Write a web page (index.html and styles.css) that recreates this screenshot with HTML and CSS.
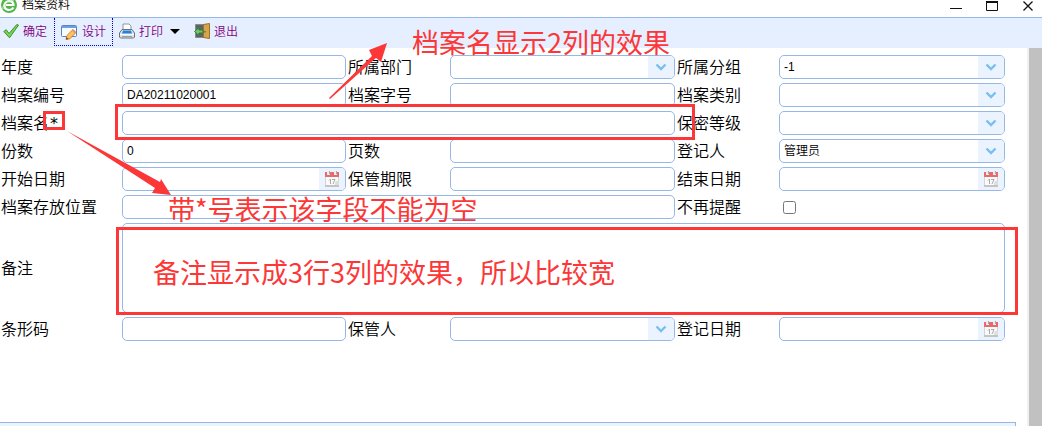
FILE: index.html
```html
<!DOCTYPE html>
<html lang="zh-CN">

<head>
    <meta charset="UTF-8">
    <meta name="viewport" content="width=device-width, initial-scale=1.0">
    <title>档案资料</title>
    <link rel="stylesheet" href="styles.css">
</head>

<body>
    <svg width="0" height="0" class="sprite">
        <symbol id="chevron" viewBox="0 0 12 8">
            <path d="M1.500 1.500 6 6l4.500-4.500" fill="none" stroke="#78bff0" stroke-width="2.400" />
        </symbol>
        <symbol id="calendar" viewBox="0 0 16 18">
            <path d="M1 6h14v10H1z" fill="#fafafa" />
            <path d="M1.500 7v9M14.500 7v5" stroke="#d4d4d4" />
            <path d="M1 15h14v2H1z" fill="#c4c4c4" />
            <path d="M1 2h14v5H1z" fill="#e56b6d" />
            <path d="M3 1h3v4H3zM10 1h3v4h-3z" fill="#ececec" />
            <path d="M5 1h1v3H5zM12 1h1v3h-1z" fill="#aaa" />
            <path d="M5 10.500l1.500-1.500v5M8 9.500h3l-2 4.500" fill="none" stroke="#aaa" />
            <path d="M12 11h3v4h-4v-2z" fill="#dedede" />
        </symbol>
    </svg>

    <header class="titlebar">
        <svg class="logo" width="16" height="16" viewBox="0 0 16 16">
            <circle cx="8" cy="8" r="8" fill="#52b64a" />
            <path d="M12.500 10.500C10 14.500 3.500 13.500 3.500 8.500c0-5.500 9-6 9-.500H5" fill="none" stroke="#fff" stroke-width="2.200" />
            <path d="M2 12C1 8 6 3 13 3" fill="none" stroke="#d8f3d0" />
        </svg>
        <h1>档案资料</h1>
        <div class="window-btns">
            <button type="button" aria-label="最小化"><svg width="12" height="12" viewBox="0 0 12 12"><path d="M0 7.500h12" stroke="#111" /></svg></button>
            <button type="button" aria-label="最大化"><svg width="12" height="12" viewBox="0 0 12 12"><path d="M.5 1v8.500h11V1M0 1.500h12" fill="none" stroke="#111" /><path d="M0 .5h12" stroke="#111" /></svg></button>
            <button type="button" aria-label="关闭"><svg width="12" height="12" viewBox="0 0 12 12"><path d="M1.500 .5l9 9M10.500 .5l-9 9" stroke="#111" stroke-width="1.300" /></svg></button>
        </div>
    </header>

    <nav class="toolbar">
        <button type="button" class="tool">
            <svg width="16" height="16" viewBox="0 0 16 16"><path d="M.8 8.500l2.400-1.800L6 10.500 13.800 1.500l1.700.6L6.500 14.800z" fill="#7bd35c" stroke="#379321" /></svg>
            <span>确定</span>
        </button>
        <button type="button" class="tool focused">
            <svg width="16" height="16" viewBox="0 0 16 16">
                <rect x=".5" y="1.500" width="15" height="11" rx="1" fill="#f7fbff" stroke="#5484c4" />
                <path d="M1 2h14v2H1z" fill="#6f9fdc" />
                <path d="M5 15.500l.8-3.800L12 5.500l3 3-6.200 6.200z" fill="#f7c565" stroke="#cb8322" />
                <path d="M11 6.500l3 3 1-1-3-3z" fill="#ec8a6c" />
                <path d="M5 15.500l.5-2.500 2 2z" fill="#734d29" />
            </svg>
            <span>设计</span>
        </button>
        <button type="button" class="tool">
            <svg width="16" height="16" viewBox="0 0 16 16">
                <path d="M4 1h6l2 2v5H4z" fill="#fff" stroke="#8b96a3" />
                <path d="M3 6.500h10L15.500 10v4l-1 1h-13l-1-1v-4z" fill="#dfe3e8" stroke="#69727e" />
                <path d="M4 7.500h8l1 3H3z" fill="#2583da" />
                <path d="M1 11.500h14" stroke="#fff" />
                <path d="M3 13.500h10" stroke="#9aa3ad" />
            </svg>
            <span>打印</span>
            <i class="caret"></i>
        </button>
        <button type="button" class="tool">
            <svg width="16" height="16" viewBox="0 0 16 16">
                <path d="M1.500 1.500h10v13h-10z" fill="#58656a" stroke="#8e8c7e" />
                <path d="M9.500 1.500L15.500.5v15l-6-1z" fill="#d5a54e" stroke="#9c7128" />
                <path d="M11 8v1.500" stroke="#614313" />
                <path d="M.5 8.500L5 4.500V7h4v3H5v2.500z" fill="#75c66b" stroke="#327a38" />
            </svg>
            <span>退出</span>
        </button>
    </nav>

    <main class="content">
        <form class="form">
            <label for="year">年度</label>
            <div class="field"><input type="text" id="year"></div>
            <label for="dept">所属部门</label>
            <div class="field"><select id="dept"><option></option></select><span class="addon"><svg width="12" height="8"><use href="#chevron" /></svg></span></div>
            <label for="group">所属分组</label>
            <div class="field"><select id="group"><option>-1</option></select><span class="addon"><svg width="12" height="8"><use href="#chevron" /></svg></span></div>

            <label for="fileNo">档案编号</label>
            <div class="field"><input type="text" id="fileNo" value="DA20211020001"></div>
            <label for="wordNo">档案字号</label>
            <div class="field"><input type="text" id="wordNo"></div>
            <label for="kind">档案类别</label>
            <div class="field"><select id="kind"><option></option></select><span class="addon"><svg width="12" height="8"><use href="#chevron" /></svg></span></div>

            <label for="fileName">档案名<span class="required">*</span></label>
            <div class="field span-2"><input type="text" id="fileName" required></div>
            <label for="secret">保密等级</label>
            <div class="field"><select id="secret"><option></option></select><span class="addon"><svg width="12" height="8"><use href="#chevron" /></svg></span></div>

            <label for="copies">份数</label>
            <div class="field"><input type="text" id="copies" value="0"></div>
            <label for="pages">页数</label>
            <div class="field"><input type="text" id="pages"></div>
            <label for="recorder">登记人</label>
            <div class="field"><select id="recorder"><option>管理员</option></select><span class="addon"><svg width="12" height="8"><use href="#chevron" /></svg></span></div>

            <label for="startDate">开始日期</label>
            <div class="field"><input type="text" id="startDate"><span class="addon"><svg width="16" height="18"><use href="#calendar" /></svg></span></div>
            <label for="keepTerm">保管期限</label>
            <div class="field"><input type="text" id="keepTerm"></div>
            <label for="endDate">结束日期</label>
            <div class="field"><input type="text" id="endDate"><span class="addon"><svg width="16" height="18"><use href="#calendar" /></svg></span></div>

            <label for="place">档案存放位置</label>
            <div class="field span-2"><input type="text" id="place"></div>
            <label for="noRemind">不再提醒</label>
            <div class="check"><input type="checkbox" id="noRemind"></div>

            <label for="remark">备注</label>
            <div class="field span-3"><textarea id="remark"></textarea></div>

            <label for="barcode">条形码</label>
            <div class="field"><input type="text" id="barcode"></div>
            <label for="keeper">保管人</label>
            <div class="field"><select id="keeper"><option></option></select><span class="addon"><svg width="12" height="8"><use href="#chevron" /></svg></span></div>
            <label for="recordDate">登记日期</label>
            <div class="field"><input type="text" id="recordDate"><span class="addon"><svg width="16" height="18"><use href="#calendar" /></svg></span></div>
        </form>
        <div class="bottom-panel"></div>
    </main>

    <!-- notes drawn over the form -->
    <div class="mark mark-star"></div>
    <div class="mark mark-name"></div>
    <div class="mark mark-remark"></div>
    <svg class="arrows" width="400" height="200" viewBox="0 0 400 200">
        <path d="M67 131L160 182 161 179 171 195 152 193 155 188z" />
        <path d="M329 98L372 56 369 50 387 43 381 62 376 58 330 99z" />
    </svg>
    <p class="note note-name">档案名显示2列的效果</p>
    <p class="note note-star">带*号表示该字段不能为空</p>
    <p class="note note-remark">备注显示成3行3列的效果，所以比较宽</p>
</body>

</html>
```
FILE: styles.css
```css
* {
    box-sizing: border-box;
}

body {
    display: flex;
    flex-direction: column;
    position: relative;
    height: 100vh;
    margin: 0;
    overflow: hidden;
    background: #fff;
    color: #000;
    font-family: "Liberation Sans", "Noto Sans CJK SC", sans-serif;
    font-size: 12px;
    font-weight: 350;
}

button {
    padding: 0;
    border: none;
    background: none;
    font: inherit;
    cursor: pointer;
}

.sprite {
    position: absolute;
}

/* title bar */
.titlebar {
    display: flex;
    align-items: flex-end;
    height: 17px;
    padding: 0 8px 4px 1px;
}

.titlebar h1 {
    margin: 0 0 0 5px;
    font-size: 12px;
    font-weight: 350;
    line-height: 16px;
}

.window-btns {
    display: flex;
    gap: 24px;
    height: 13px;
    margin-left: auto;
}

.window-btns svg {
    display: block;
}

/* toolbar */
.toolbar {
    display: flex;
    align-items: flex-start;
    height: 31px;
    border-top: 1px solid #95b8e7;
    background: #e5efff;
}

.tool {
    display: flex;
    align-items: center;
    gap: 4px;
    height: 28px;
    padding: 0 7px 2px 3px;
    color: #800080;
}

.tool span {
    padding-bottom: 2px;
}

.tool.focused {
    padding: 0 6px 0 6px;
    border: 1px dotted #0000d0;
    border-top: none;
    margin-right: 3px;
}

.tool.focused svg {
    margin-right: 1px;
}

.caret {
    margin: 0 4px 0 3px;
    border: 5px solid transparent;
    border-top-color: #000;
    border-bottom: none;
}

/* form */
.content {
    display: flex;
    flex: 1;
    flex-direction: column;
    border-right: 13px solid #c1c1c1;
    box-shadow: inset -2px 0 #f1f1f1;
}

.form {
    display: grid;
    grid-template-columns: 119px 224fr 100px 225fr 100px 226fr;
    gap: 4px 2px;
    padding: 7px 24px 0 1px;
}

.form label {
    align-self: center;
    padding-bottom: 2px;
    font-family: "Noto Sans CJK SC", sans-serif;
    font-size: 16px;
    line-height: 22px;
    white-space: nowrap;
}

.required {
    padding-left: 1px;
    font-family: "DejaVu Sans", sans-serif;
    font-weight: 400;
    line-height: 1;
}

.field {
    display: flex;
    min-width: 0;
    height: 24px;
    border: 1px solid #95b8e7;
    border-radius: 5px;
    background: #fff;
    overflow: hidden;
}

.field input,
.field select,
.field textarea {
    flex: 1;
    min-width: 0;
    padding: 0 4px;
    border: none;
    outline: none;
    background: none;
    color: #000;
    font: inherit;
    resize: none;
    appearance: none;
}

.addon {
    display: flex;
    align-items: center;
    justify-content: center;
    width: 26px;
    background: #ebf3ff;
}

.span-2 {
    grid-column: span 3;
}

.span-3 {
    grid-column: span 5;
    height: 90px;
}

.check {
    display: flex;
    align-items: center;
}

.check input {
    margin: 0 0 0 4px;
}

.bottom-panel {
    height: 4px;
    margin: auto 13px 0 0;
    border: 1px solid #95b8e7;
    border-width: 1px 1px 0 0;
    background: #ebf3ff;
}

/* notes */
.mark {
    position: absolute;
    border: 3px solid #fc3737;
    pointer-events: none;
}

.mark-star {
    top: 111px;
    left: 43px;
    width: 22px;
    height: 19px;
}

.mark-name {
    top: 104px;
    left: 115px;
    width: 580px;
    height: 36px;
}

.mark-remark {
    top: 227px;
    left: 116px;
    width: 902px;
    height: 88px;
}

.arrows {
    position: absolute;
    top: 0;
    left: 0;
    fill: #fc3737;
    pointer-events: none;
}

.note {
    position: absolute;
    margin: 0;
    color: #fc3737;
    font-family: "Noto Sans CJK SC", sans-serif;
    font-size: 27px;
    font-weight: 400;
    line-height: 36px;
    white-space: nowrap;
    pointer-events: none;
}

.note-name {
    top: 24px;
    left: 412px;
}

.note-star {
    top: 191px;
    left: 168px;
}

.note-remark {
    top: 254px;
    left: 153px;
}
```
